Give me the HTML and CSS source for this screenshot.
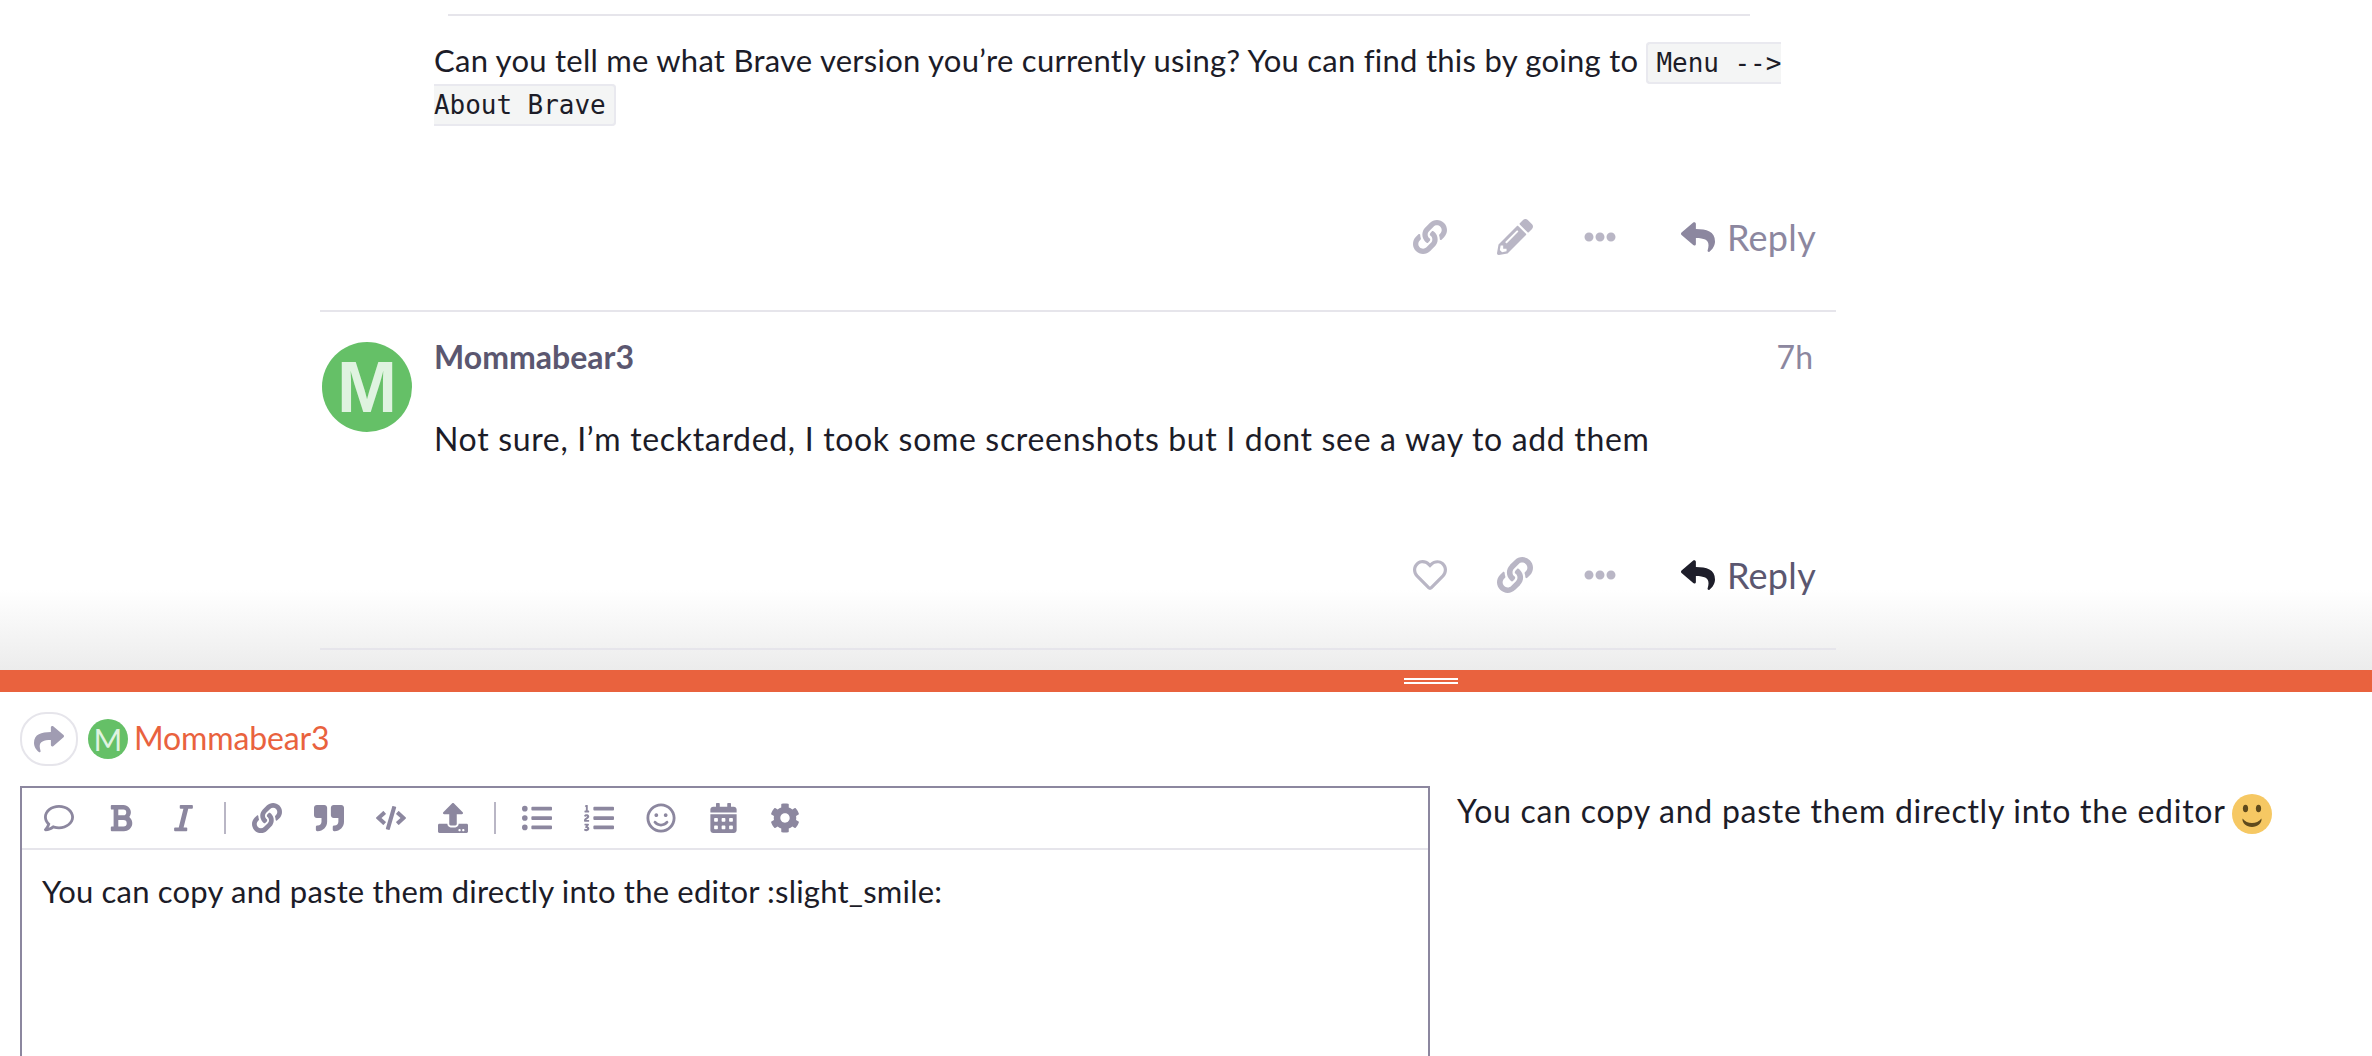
FILE: index.html
```html
<!DOCTYPE html>
<html lang="en">
<head>
<meta charset="utf-8">
<title>Topic reply</title>
<link rel="stylesheet" href="styles.css">
</head>
<body>
<svg class="defs" aria-hidden="true">
  <symbol id="i-link" viewBox="0 0 512 512"><path d="M326.612 185.391c59.747 59.809 58.927 155.698.36 214.59-.11.12-.24.25-.36.37l-67.2 67.2c-59.27 59.27-155.699 59.262-214.96 0-59.27-59.26-59.27-155.7 0-214.96l37.106-37.106c9.84-9.84 26.786-3.3 27.294 10.606.648 17.722 3.826 35.527 9.69 52.721 1.986 5.822.567 12.262-3.783 16.612l-13.087 13.087c-28.026 28.026-28.905 73.66-1.155 101.96 28.024 28.579 74.086 28.749 102.325.51l67.2-67.19c28.191-28.191 28.073-73.757 0-101.83-3.701-3.694-7.429-6.564-10.341-8.569a16.037 16.037 0 0 1-6.947-12.606c-.396-10.567 3.348-21.456 11.698-29.806l21.054-21.055c5.521-5.521 14.182-6.199 20.584-1.731a152.482 152.482 0 0 1 20.522 17.197zM467.547 44.449c-59.261-59.262-155.69-59.27-214.96 0l-67.2 67.2c-.12.12-.25.25-.36.37-58.566 58.892-59.387 154.781.36 214.59a152.454 152.454 0 0 0 20.521 17.196c6.402 4.468 15.064 3.789 20.584-1.731l21.054-21.055c8.35-8.35 12.094-19.239 11.698-29.806a16.037 16.037 0 0 0-6.947-12.606c-2.912-2.005-6.64-4.875-10.341-8.569-28.073-28.073-28.191-73.639 0-101.83l67.2-67.19c28.239-28.239 74.3-28.069 102.325.51 27.75 28.3 26.872 73.934-1.155 101.96l-13.087 13.087c-4.35 4.35-5.769 10.79-3.783 16.612 5.864 17.194 9.042 34.999 9.69 52.721.509 13.906 17.454 20.446 27.294 10.606l37.106-37.106c59.271-59.259 59.271-155.699.001-214.959z"/></symbol>
  <symbol id="i-pencil" viewBox="0 0 512 512"><path d="M497.9 142.1l-46.1 46.1c-4.7 4.7-12.3 4.7-17 0l-111-111c-4.7-4.7-4.7-12.3 0-17l46.1-46.1c18.7-18.7 49.1-18.7 67.9 0l60.1 60.1c18.8 18.7 18.8 49.1 0 67.9zM284.2 99.8L21.6 362.4.4 483.9c-2.9 16.4 11.4 30.6 27.8 27.8l121.5-21.3 262.6-262.6c4.7-4.7 4.7-12.3 0-17l-111-111c-4.8-4.7-12.4-4.7-17.1 0zM124.1 339.9c-5.5-5.5-5.5-14.3 0-19.8l154-154c5.5-5.5 14.3-5.5 19.8 0s5.5 14.3 0 19.8l-154 154c-5.5 5.5-14.3 5.5-19.8 0zM88 424h48v36.3l-64.5 11.3-31.1-31.1L51.7 376H88v48z"/></symbol>
  <symbol id="i-dots" viewBox="0 0 512 512"><path d="M328 256c0 39.8-32.2 72-72 72s-72-32.2-72-72 32.2-72 72-72 72 32.2 72 72zm104-72c-39.8 0-72 32.2-72 72s32.2 72 72 72 72-32.2 72-72-32.2-72-72-72zm-352 0c-39.8 0-72 32.2-72 72s32.2 72 72 72 72-32.2 72-72-32.2-72-72-72z"/></symbol>
  <symbol id="i-reply" viewBox="0 0 512 512"><path d="M8.309 189.836L184.313 37.851C199.719 24.546 224 35.347 224 56.015v80.053c160.629 1.839 288 34.032 288 186.258 0 61.441-39.581 122.309-83.333 154.132-13.653 9.931-33.111-2.533-28.077-18.631 45.344-145.012-21.507-183.51-176.59-185.742V360c0 20.7-24.3 31.453-39.687 18.164l-176.004-152c-11.071-9.562-11.086-26.753 0-36.328z"/></symbol>
  <symbol id="i-share" viewBox="0 0 512 512"><path d="M503.691 189.836L327.687 37.851C312.281 24.546 288 35.347 288 56.015v80.053C127.371 137.907 0 170.1 0 322.326c0 61.441 39.581 122.309 83.333 154.132 13.653 9.931 33.111-2.533 28.077-18.631C66.066 312.814 132.917 274.316 288 272.085V360c0 20.7 24.3 31.453 39.687 18.164l176.004-152c11.071-9.562 11.086-26.753 0-36.328z"/></symbol>
  <symbol id="i-heart" viewBox="0 0 512 512"><path d="M458.4 64.3C400.6 15.7 311.3 23 256 79.3 200.7 23 111.4 15.6 53.6 64.3-21.6 127.6-10.6 230.8 43 285.5l175.4 178.7c10 10.2 23.4 15.9 37.6 15.9 14.3 0 27.6-5.6 37.6-15.8L469 285.6c53.5-54.7 64.7-157.9-10.6-221.3zm-23.6 187.5L259.4 430.5c-2.4 2.4-4.4 2.4-6.8 0L77.2 251.8c-36.5-37.2-43.9-107.6 7.3-150.7 38.9-32.7 98.9-27.8 136.5 10.5l35 35.7 35-35.7c37.8-38.5 97.8-43.2 136.5-10.6 51.1 43.1 43.5 113.9 7.3 150.8z"/></symbol>
  <symbol id="i-comment" viewBox="0 0 512 512"><path d="M256 32C114.6 32 0 125.1 0 240c0 47.6 19.9 91.2 52.9 126.3C38 405.7 7 439.1 6.5 439.5c-6.6 7-8.4 17.2-4.6 26S14.4 480 24 480c61.5 0 110-25.7 139.1-46.3C192 442.8 223.2 448 256 448c141.4 0 256-93.1 256-208S397.4 32 256 32zm0 368c-26.7 0-53.1-4.1-78.4-12.1l-22.7-7.2-19.5 13.8c-14.3 10.1-33.9 21.4-57.5 29 7.3-12.1 14.4-25.7 19.9-40.2l10.6-28.1-20.6-21.8C69.7 314.1 48 282.2 48 240c0-88.2 93.3-160 208-160s208 71.8 208 160-93.3 160-208 160z"/></symbol>
  <symbol id="i-bold" viewBox="0 0 384 512"><path d="M333.49 238a122 122 0 0 0 27-65.21C367.87 96.49 308 32 233.42 32H34a16 16 0 0 0-16 16v48a16 16 0 0 0 16 16h31.87v288H34a16 16 0 0 0-16 16v48a16 16 0 0 0 16 16h209.32c70.8 0 134.14-51.75 141-122.4 4.74-48.45-16.39-92.06-50.83-119.6zM145.66 112h87.76a48 48 0 0 1 0 96h-87.76zm87.76 288h-87.76V288h87.76a56 56 0 0 1 0 112z"/></symbol>
  <symbol id="i-italic" viewBox="0 0 320 512"><path d="M320 48v32a16 16 0 0 1-16 16h-62.76l-80 320H208a16 16 0 0 1 16 16v32a16 16 0 0 1-16 16H16a16 16 0 0 1-16-16v-32a16 16 0 0 1 16-16h62.76l80-320H112a16 16 0 0 1-16-16V48a16 16 0 0 1 16-16h192a16 16 0 0 1 16 16z"/></symbol>
  <symbol id="i-quote" viewBox="0 0 512 512"><path d="M464 32H336c-26.5 0-48 21.5-48 48v128c0 26.5 21.5 48 48 48h80v64c0 35.3-28.7 64-64 64h-8c-13.3 0-24 10.7-24 24v48c0 13.3 10.7 24 24 24h8c88.4 0 160-71.6 160-160V80c0-26.5-21.5-48-48-48zm-288 0H48C21.5 32 0 53.5 0 80v128c0 26.5 21.5 48 48 48h80v64c0 35.3-28.7 64-64 64h-8c-13.3 0-24 10.7-24 24v48c0 13.3 10.7 24 24 24h8c88.4 0 160-71.6 160-160V80c0-26.5-21.5-48-48-48z"/></symbol>
  <symbol id="i-code" viewBox="0 0 640 512"><path d="M278.9 511.5l-61-17.7c-6.4-1.8-10-8.5-8.2-14.9L346.2 8.7c1.8-6.4 8.5-10 14.9-8.2l61 17.7c6.4 1.8 10 8.5 8.2 14.9L293.8 503.3c-1.9 6.4-8.5 10.1-14.9 8.2zm-114-112.2l43.5-46.4c4.6-4.9 4.3-12.7-.8-17.2L117 256l90.6-79.7c5.1-4.5 5.5-12.3.8-17.2l-43.5-46.4c-4.5-4.8-12.1-5.1-17-.5L3.8 247.2c-5.1 4.7-5.1 12.8 0 17.5l144.1 135.1c4.9 4.6 12.5 4.4 17-.5zm327.2.6l144.1-135.1c5.1-4.7 5.1-12.8 0-17.5L492.1 112.1c-4.8-4.5-12.4-4.3-17 .5L431.6 159c-4.6 4.9-4.3 12.7.8 17.2L523 256l-90.6 79.7c-5.1 4.5-5.5 12.3-.8 17.2l43.5 46.4c4.5 4.9 12.1 5.1 17 .6z"/></symbol>
  <symbol id="i-upload" viewBox="0 0 512 512"><path d="M296 384h-80c-13.3 0-24-10.7-24-24V192h-87.7c-17.8 0-26.7-21.5-14.1-34.1L242.3 5.7c7.5-7.5 19.8-7.5 27.3 0l152.2 152.2c12.6 12.6 3.7 34.1-14.1 34.1H320v168c0 13.3-10.7 24-24 24zm216-8v112c0 13.3-10.7 24-24 24H24c-13.3 0-24-10.7-24-24V376c0-13.3 10.7-24 24-24h136v8c0 30.9 25.1 56 56 56h80c30.9 0 56-25.1 56-56v-8h136c13.3 0 24 10.7 24 24zm-124 88c0-11-9-20-20-20s-20 9-20 20 9 20 20 20 20-9 20-20zm64 0c0-11-9-20-20-20s-20 9-20 20 9 20 20 20 20-9 20-20z"/></symbol>
  <symbol id="i-ul" viewBox="0 0 512 512"><path d="M48 48a48 48 0 1 0 48 48 48 48 0 0 0-48-48zm0 160a48 48 0 1 0 48 48 48 48 0 0 0-48-48zm0 160a48 48 0 1 0 48 48 48 48 0 0 0-48-48zm448 16H176a16 16 0 0 0-16 16v32a16 16 0 0 0 16 16h320a16 16 0 0 0 16-16v-32a16 16 0 0 0-16-16zm0-320H176a16 16 0 0 0-16 16v32a16 16 0 0 0 16 16h320a16 16 0 0 0 16-16V80a16 16 0 0 0-16-16zm0 160H176a16 16 0 0 0-16 16v32a16 16 0 0 0 16 16h320a16 16 0 0 0 16-16v-32a16 16 0 0 0-16-16z"/></symbol>
  <symbol id="i-ol" viewBox="0 0 512 512"><path d="M61.77 401l17.5-20.15a19.92 19.92 0 0 0 5.07-14.19v-3.31C84.34 356 80.5 352 73 352H16a8 8 0 0 0-8 8v16a8 8 0 0 0 8 8h22.83a157.41 157.41 0 0 0-11 12.31l-5.61 7c-4 5.07-5.25 10.13-2.8 14.88l1.05 1.93c3 5.76 6.29 7.88 12.25 7.88h4.73c10.33 0 15.94 2.44 15.94 9.09 0 4.72-4.2 8.22-14.36 8.22a41.54 41.54 0 0 1-15.47-3.12c-6.49-3.88-11.74-3.5-15.6 3.12l-5.59 9.31c-3.72 6.13-3.19 11.72 2.63 15.94 7.71 4.69 20.38 9.44 37 9.44 34.16 0 48.5-22.75 48.5-44.12-.03-14.38-9.12-29.76-28.73-34.88zM496 224H176a16 16 0 0 0-16 16v32a16 16 0 0 0 16 16h320a16 16 0 0 0 16-16v-32a16 16 0 0 0-16-16zm0-160H176a16 16 0 0 0-16 16v32a16 16 0 0 0 16 16h320a16 16 0 0 0 16-16V80a16 16 0 0 0-16-16zm0 320H176a16 16 0 0 0-16 16v32a16 16 0 0 0 16 16h320a16 16 0 0 0 16-16v-32a16 16 0 0 0-16-16zM16 160h64a8 8 0 0 0 8-8v-16a8 8 0 0 0-8-8H64V40a8 8 0 0 0-8-8H32a8 8 0 0 0-7.14 4.42l-8 16A8 8 0 0 0 24 64h8v64H16a8 8 0 0 0-8 8v16a8 8 0 0 0 8 8zm-3.91 160H80a8 8 0 0 0 8-8v-16a8 8 0 0 0-8-8H41.32c3.29-10.29 48.34-18.68 48.34-56.44 0-29.06-25-39.56-44.47-39.56-21.36 0-33.8 10-40.46 18.75-4.37 5.59-3 10.84 2.8 15.37l8.58 6.88c5.61 4.56 11 2.47 16.12-2.44a13.44 13.44 0 0 1 9.46-3.84c3.33 0 9.28 1.56 9.28 8.75C51 248.19 0 257.31 0 304.59v4C0 316 5.08 320 12.09 320z"/></symbol>
  <symbol id="i-smile" viewBox="0 0 496 512"><path d="M248 8C111 8 0 119 0 256s111 248 248 248 248-111 248-248S385 8 248 8zm0 448c-110.3 0-200-89.7-200-200S137.7 56 248 56s200 89.7 200 200-89.7 200-200 200zm-80-216c17.7 0 32-14.3 32-32s-14.3-32-32-32-32 14.3-32 32 14.3 32 32 32zm160 0c17.7 0 32-14.3 32-32s-14.3-32-32-32-32 14.3-32 32 14.3 32 32 32zm4 72.6c-20.8 25-51.5 39.4-84 39.4s-63.2-14.3-84-39.4c-8.5-10.2-23.7-11.5-33.8-3.1-10.2 8.5-11.5 23.6-3.1 33.8 30 36 74.1 56.6 120.9 56.6s90.9-20.6 120.9-56.6c8.5-10.2 7.1-25.3-3.1-33.8-10.1-8.4-25.3-7.1-33.8 3.1z"/></symbol>
  <symbol id="i-calendar" viewBox="0 0 448 512"><path d="M0 464c0 26.5 21.5 48 48 48h352c26.5 0 48-21.5 48-48V192H0v272zm320-196c0-6.6 5.4-12 12-12h40c6.6 0 12 5.4 12 12v40c0 6.6-5.4 12-12 12h-40c-6.6 0-12-5.4-12-12v-40zm0 128c0-6.6 5.4-12 12-12h40c6.6 0 12 5.4 12 12v40c0 6.6-5.4 12-12 12h-40c-6.6 0-12-5.4-12-12v-40zM192 268c0-6.6 5.4-12 12-12h40c6.6 0 12 5.4 12 12v40c0 6.6-5.4 12-12 12h-40c-6.6 0-12-5.4-12-12v-40zm0 128c0-6.6 5.4-12 12-12h40c6.6 0 12 5.4 12 12v40c0 6.6-5.4 12-12 12h-40c-6.6 0-12-5.4-12-12v-40zM64 268c0-6.6 5.4-12 12-12h40c6.6 0 12 5.4 12 12v40c0 6.6-5.4 12-12 12H76c-6.6 0-12-5.4-12-12v-40zm0 128c0-6.6 5.4-12 12-12h40c6.6 0 12 5.4 12 12v40c0 6.6-5.4 12-12 12H76c-6.6 0-12-5.4-12-12v-40zM400 64h-48V16c0-8.8-7.2-16-16-16h-32c-8.8 0-16 7.2-16 16v48H160V16c0-8.8-7.2-16-16-16h-32c-8.8 0-16 7.2-16 16v48H48C21.5 64 0 85.5 0 112v48h448v-48c0-26.5-21.5-48-48-48z"/></symbol>
  <symbol id="i-cog" viewBox="0 0 512 512"><path d="M487.4 315.7l-42.6-24.6c4.3-23.2 4.3-47 0-70.2l42.6-24.6c4.9-2.8 7.1-8.6 5.5-14-11.1-35.6-30-67.8-54.7-94.6-3.8-4.1-10-5.1-14.8-2.3L380.8 110c-17.9-15.4-38.5-27.3-60.8-35.1V25.8c0-5.6-3.9-10.5-9.4-11.7-36.7-8.2-74.3-7.8-109.2 0-5.5 1.2-9.4 6.1-9.4 11.7V75c-22.2 7.9-42.8 19.8-60.8 35.1L88.7 85.5c-4.9-2.8-11-1.9-14.8 2.3-24.7 26.7-43.6 58.9-54.7 94.6-1.7 5.4.6 11.2 5.5 14L67.3 221c-4.3 23.2-4.3 47 0 70.2l-42.6 24.6c-4.9 2.8-7.1 8.6-5.5 14 11.1 35.6 30 67.8 54.7 94.6 3.8 4.1 10 5.1 14.8 2.3l42.6-24.6c17.9 15.4 38.5 27.3 60.8 35.1v49.2c0 5.6 3.9 10.5 9.4 11.7 36.7 8.2 74.3 7.8 109.2 0 5.5-1.2 9.4-6.1 9.4-11.7v-49.2c22.2-7.9 42.8-19.8 60.8-35.1l42.6 24.6c4.9 2.8 11 1.9 14.8-2.3 24.7-26.7 43.6-58.9 54.7-94.6 1.5-5.5-.7-11.3-5.6-14.1zM256 336c-44.1 0-80-35.9-80-80s35.9-80 80-80 80 35.9 80 80-35.9 80-80 80z"/></symbol>
</svg>

<main class="page">
  <section class="topic">
    <article class="post post-first">
      <div class="post-main">
        <hr class="rule">
        <p class="cooked">Can you tell me what Brave version you’re currently using? You can find this by going to <code class="chip">Menu --&gt; About Brave</code></p>
      </div>
      <div class="actions">
        <button class="act"><svg class="ico ico-link"><use href="#i-link"/></svg></button>
        <button class="act"><svg class="ico ico-pencil"><use href="#i-pencil"/></svg></button>
        <button class="act"><svg class="ico ico-dots"><use href="#i-dots"/></svg></button>
        <button class="reply reply-muted"><svg class="ico ico-reply"><use href="#i-reply"/></svg><span>Reply</span></button>
      </div>
    </article>

    <article class="post post-second">
      <div class="post-row">
        <div class="avatar">M</div>
        <div class="post-content">
          <header class="post-head"><span class="author">Mommabear3</span><span class="age">7h</span></header>
          <p class="cooked">Not sure, I’m tecktarded, I took some screenshots but I dont see a way to add them</p>
        </div>
      </div>
      <div class="actions">
        <button class="act"><svg class="ico ico-link"><use href="#i-heart"/></svg></button>
        <button class="act"><svg class="ico ico-pencil"><use href="#i-link"/></svg></button>
        <button class="act"><svg class="ico ico-dots"><use href="#i-dots"/></svg></button>
        <button class="reply reply-active"><svg class="ico ico-reply"><use href="#i-reply"/></svg><span>Reply</span></button>
      </div>
    </article>
    <div class="fade"></div>
  </section>

  <section class="composer">
    <div class="grip-bar"><span class="grip"></span></div>
    <div class="reply-to">
      <button class="back"><svg class="ico-back"><use href="#i-share"/></svg></button>
      <span class="mini-avatar">M</span>
      <span class="reply-name">Mommabear3</span>
    </div>
    <div class="editor-wrap">
      <div class="editor">
        <div class="toolbar">
          <button class="tool"><svg><use href="#i-comment"/></svg></button>
          <button class="tool"><svg class="narrow-b"><use href="#i-bold"/></svg></button>
          <button class="tool"><svg class="narrow-i"><use href="#i-italic"/></svg></button>
          <span class="sep"></span>
          <button class="tool"><svg><use href="#i-link"/></svg></button>
          <button class="tool"><svg><use href="#i-quote"/></svg></button>
          <button class="tool"><svg><use href="#i-code"/></svg></button>
          <button class="tool"><svg><use href="#i-upload"/></svg></button>
          <span class="sep"></span>
          <button class="tool"><svg><use href="#i-ul"/></svg></button>
          <button class="tool"><svg><use href="#i-ol"/></svg></button>
          <button class="tool"><svg><use href="#i-smile"/></svg></button>
          <button class="tool"><svg class="narrow-c"><use href="#i-calendar"/></svg></button>
          <button class="tool"><svg><use href="#i-cog"/></svg></button>
        </div>
        <div class="input">You can copy and paste them directly into the editor :slight_smile:</div>
      </div>
      <div class="preview">
        <span>You can copy and paste them directly into the editor</span>
        <svg class="emoji" viewBox="0 0 40 40" aria-label="slight smile">
          <circle cx="20" cy="20" r="20" fill="#f6c863"/>
          <ellipse cx="13.500" cy="14.500" rx="2.600" ry="3.800" fill="#5f4a1c"/>
          <ellipse cx="26.500" cy="14.500" rx="2.600" ry="3.800" fill="#5f4a1c"/>
          <path d="M10.500 24.500c2.500 3 5.800 4.500 9.500 4.500s7-1.500 9.500-4.500c.6 4.800-4 8.500-9.500 8.500s-10.100-3.700-9.500-8.500z" fill="#5f4a1c"/>
        </svg>
      </div>
    </div>
  </section>
</main>
</body>
</html>
```

FILE: styles.css
```css
* { box-sizing: border-box; }
html, body { margin: 0; padding: 0; }
body {
  width: 2372px;
  height: 1056px;
  overflow: hidden;
  background: #fff;
  color: #1c1c28;
  font-family: "Lato", "Noto Sans", sans-serif;
  font-size: 32px;
}
button {
  border: 0;
  background: none;
  padding: 0;
  margin: 0;
  font: inherit;
  color: inherit;
}
.defs { display: none; }
.page { display: flex; flex-direction: column; height: 1056px; }

/* Topic stream */
.topic {
  position: relative;
  height: 670px;
  flex: none;
  padding: 14px 536px 0 320px;
  overflow: hidden;
}
.post { position: relative; z-index: 1; border-bottom: 2px solid #e6e5eb; }
.post-first { height: 298px; }
.post-second { height: 338px; }
.post-main { padding-left: 114px; padding-right: 24px; }
.rule {
  width: 1302px;
  height: 2px;
  margin: 0 0 0 14px;
  border: 0;
  background: #e6e5eb;
}
.cooked {
  margin: 0;
  font-size: 32px;
  line-height: 42px;
  letter-spacing: 0.67px;
  color: #1c1c28;
}
.post-main .cooked {
  margin-top: 23px;
  font-size: 31px;
  letter-spacing: 0.26px;
}
.chip {
  font-family: "DejaVu Sans Mono", "Liberation Mono", monospace;
  font-size: 26px;
  line-height: 1;
  letter-spacing: -0.05px;
  color: #1c1c28;
  background: #f4f5f5;
  border: 2px solid #e9e9ef;
  border-radius: 4px;
  padding: 4px 8px;
}

.actions {
  display: flex;
  align-items: center;
  height: 56px;
  padding-right: 20px;
  justify-content: flex-end;
}
.post-first .actions { margin-top: 86px; }
.post-second .actions { margin-top: 87px; }
.act {
  display: flex;
  align-items: center;
  justify-content: center;
  width: 85px;
  height: 56px;
  color: #b9b6c5;
}
.ico { fill: currentColor; display: block; }
.ico-link { width: 34px; height: 34px; }
.ico-pencil { width: 36px; height: 36px; }
.ico-dots { width: 32px; height: 32px; }
.ico-reply { width: 34px; height: 34px; }
.reply {
  display: flex;
  align-items: center;
  gap: 12px;
  margin-left: 38px;
  font-size: 36px;
  letter-spacing: 0.3px;
}
.reply-muted { color: #8c879f; }
.reply-active { color: #5b5770; }
.reply-active .ico { color: #1e1e2a; }

.post-row { display: flex; padding-top: 30px; padding-right: 23px; }
.avatar {
  width: 90px;
  height: 90px;
  border-radius: 50%;
  margin: 0 22px 0 2px;
  background: #65c067;
  color: #dff3e0;
  font-family: "Liberation Sans", sans-serif;
  font-weight: 700;
  font-size: 72px;
  line-height: 90px;
  text-align: center;
  flex: none;
}
.post-content { flex: 1; min-width: 0; }
.post-head {
  display: flex;
  justify-content: space-between;
  align-items: center;
  height: 28px;
}
.author { font-weight: 700; font-size: 32px; color: #5b5770; }
.age { font-size: 32px; color: #8c879f; }
.post-content .cooked { margin-top: 48px; }

.fade {
  position: absolute;
  z-index: 0;
  left: 0;
  right: 0;
  bottom: 0;
  height: 80px;
  background: linear-gradient(to bottom, rgba(236, 236, 236, 0), #ececec);
}

/* Composer */
.composer { flex: 1; display: flex; flex-direction: column; min-height: 0; }
.grip-bar {
  height: 22px;
  flex: none;
  background: #e9623e;
  padding: 8px 0 0 1404px;
}
.grip {
  display: block;
  width: 54px;
  height: 6px;
  border-top: 2px solid #fff;
  border-bottom: 2px solid #fff;
}
.reply-to {
  display: flex;
  align-items: center;
  height: 94px;
  padding: 20px 0 20px 20px;
  flex: none;
}
.back {
  width: 58px;
  height: 54px;
  border: 2px solid #e6e5eb;
  border-radius: 26px;
  display: flex;
  align-items: center;
  justify-content: center;
  flex: none;
}
.ico-back { width: 30px; height: 30px; fill: #a09cb2; display: block; }
.mini-avatar {
  width: 40px;
  height: 40px;
  margin: 0 6px 0 10px;
  border-radius: 50%;
  background: #65c067;
  color: #dff3e0;
  font-size: 31px;
  line-height: 40px;
  text-align: center;
  flex: none;
}
.reply-name { font-size: 32px; letter-spacing: -0.15px; color: #e9623e; padding-bottom: 3px; }

.editor-wrap { flex: 1; display: flex; min-height: 0; padding-left: 20px; }
.editor {
  width: 1410px;
  height: 300px;
  flex: none;
  border: 2px solid #8c879f;
  border-bottom: 0;
}
.toolbar {
  display: flex;
  align-items: center;
  height: 62px;
  padding-left: 6px;
  border-bottom: 2px solid #e6e5eb;
}
.tool {
  width: 62px;
  height: 46px;
  display: flex;
  align-items: center;
  justify-content: center;
  flex: none;
}
.tool svg { width: 30px; height: 30px; fill: #8c879f; display: block; }
.tool .narrow-b { width: 24px; }
.tool .narrow-i { width: 19px; }
.tool .narrow-c { width: 27px; }
.sep {
  width: 2px;
  height: 32px;
  background: #b9b6c5;
  margin: 0 10px;
  flex: none;
}
.input {
  padding: 20px 12px 0 20px;
  font-size: 31px;
  line-height: 42px;
  letter-spacing: 0.2px;
  color: #1c1c28;
}
.preview {
  display: flex;
  align-items: flex-start;
  gap: 6px;
  padding: 4px 0 0 27px;
  font-size: 32px;
  line-height: 42px;
  letter-spacing: 0.74px;
  color: #1c1c28;
}
.emoji { width: 40px; height: 40px; flex: none; margin-top: 4px; }
```
